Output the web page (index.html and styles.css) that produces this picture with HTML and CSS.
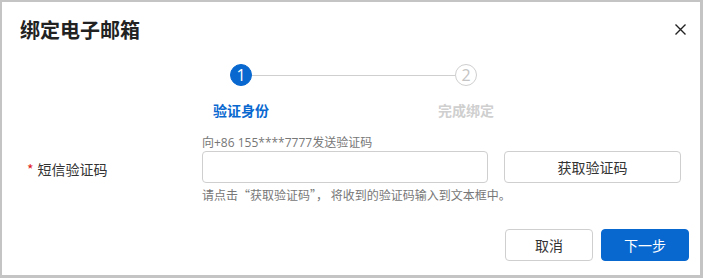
FILE: index.html
```html
<!DOCTYPE html>
<html lang="zh-CN">
<head>
<meta charset="utf-8">
<link rel="stylesheet" href="styles.css">
</head>
<body>
<div class="dialog">
  <div class="header">
    <div class="title">绑定电子邮箱</div>
    <button class="close" aria-label="关闭">
      <svg width="11" height="11" viewBox="0 0 11 11"><path d="M0.5 0.5 L10.5 10.5 M10.5 0.5 L0.5 10.5" stroke="#222" stroke-width="1.4" fill="none"/></svg>
    </button>
  </div>
  <div class="steps">
    <div class="step active">
      <div class="circle">1</div>
      <div class="step-label">验证身份</div>
    </div>
    <div class="step-line"></div>
    <div class="step">
      <div class="circle">2</div>
      <div class="step-label">完成绑定</div>
    </div>
  </div>
  <div class="form-row">
    <div class="label"><span class="req">*</span>短信验证码</div>
    <div class="field">
      <div class="tip">向+86 155****7777发送验证码</div>
      <div class="controls">
        <input class="input" type="text">
        <button class="btn code-btn">获取验证码</button>
      </div>
      <div class="tip hint">请点击“获取验证码”， 将收到的验证码输入到文本框中。</div>
    </div>
  </div>
  <div class="footer">
    <button class="btn">取消</button>
    <button class="btn primary">下一步</button>
  </div>
</div>
</body>
</html>
```

FILE: styles.css
```css
html, body {
  margin: 0;
  padding: 0;
}
body {
  background: #c4c4c4;
  width: 703px;
  height: 278px;
  overflow: hidden;
  font-family: "Noto Sans CJK SC", "Noto Sans", sans-serif;
  color: #333;
}
.dialog {
  margin: 2px 3px 3px 2px;
  width: 698px;
  height: 273px;
  background: #fff;
  box-sizing: border-box;
  display: flex;
  flex-direction: column;
}
.header {
  display: flex;
  justify-content: space-between;
  align-items: center;
  padding: 16px 14px 0 18px;
  height: 24px;
}
.title {
  font-size: 20px;
  font-weight: bold;
  color: #222;
  line-height: 24px;
}
.close {
  border: 0;
  background: none;
  padding: 0;
  width: 11px;
  height: 11px;
  display: flex;
  margin-top: -2px;
}
.steps {
  display: flex;
  margin-top: 22px;
  margin-left: 199px;
}
.step {
  width: 80px;
  display: flex;
  flex-direction: column;
  align-items: center;
}
.circle {
  width: 22px;
  height: 22px;
  box-sizing: border-box;
  border-radius: 50%;
  border: 1px solid #cfcfcf;
  color: #c4c4c4;
  font-family: "Open Sans", "Liberation Sans", sans-serif;
  font-size: 16px;
  line-height: 20px;
  text-align: center;
  background: #fff;
}
.step.active .circle {
  background: #0868d0;
  border-color: #0868d0;
  color: #fff;
}
.step-label {
  margin-top: 14px;
  font-size: 14px;
  font-weight: bold;
  line-height: 20px;
  color: #cfcfcf;
  white-space: nowrap;
}
.step.active .step-label {
  color: #0868d0;
}
.step-line {
  width: 203px;
  height: 1px;
  background: #cfcfcf;
  margin: 11px -29px 0;
}
.form-row {
  display: flex;
  margin-top: 15px;
}
.label {
  width: 200px;
  box-sizing: border-box;
  padding-left: 25px;
  padding-top: 24px;
  font-size: 14px;
  line-height: 20px;
  color: #333;
}
.req {
  color: #e02020;
  margin-right: 4px;
}
.tip {
  font-family: "Open Sans", "Noto Sans CJK SC", sans-serif;
  font-size: 12px;
  line-height: 16px;
  color: #777;
  white-space: pre;
}
.tip.hint {
  font-family: "Noto Sans CJK SC", sans-serif;
}
.controls {
  display: flex;
  gap: 16px;
  margin: 0 0 4px;
}
.input {
  width: 286px;
  height: 32px;
  box-sizing: border-box;
  border: 1px solid #cfcfcf;
  border-radius: 4px;
  margin: 0;
  padding: 0 8px;
  outline: none;
}
.btn {
  height: 32px;
  width: 88px;
  box-sizing: border-box;
  border: 1px solid #cfcfcf;
  border-radius: 4px;
  background: #fff;
  color: #333;
  font-family: "Noto Sans CJK SC", "Noto Sans", sans-serif;
  font-size: 14px;
  padding: 0;
  margin: 0;
}
.code-btn {
  width: 177px;
}
.footer {
  display: flex;
  justify-content: flex-end;
  gap: 8px;
  margin-top: auto;
  padding: 0 11px 14px 0;
}
.btn.primary {
  background: #0868d0;
  border-color: #0868d0;
  color: #fff;
}
```
